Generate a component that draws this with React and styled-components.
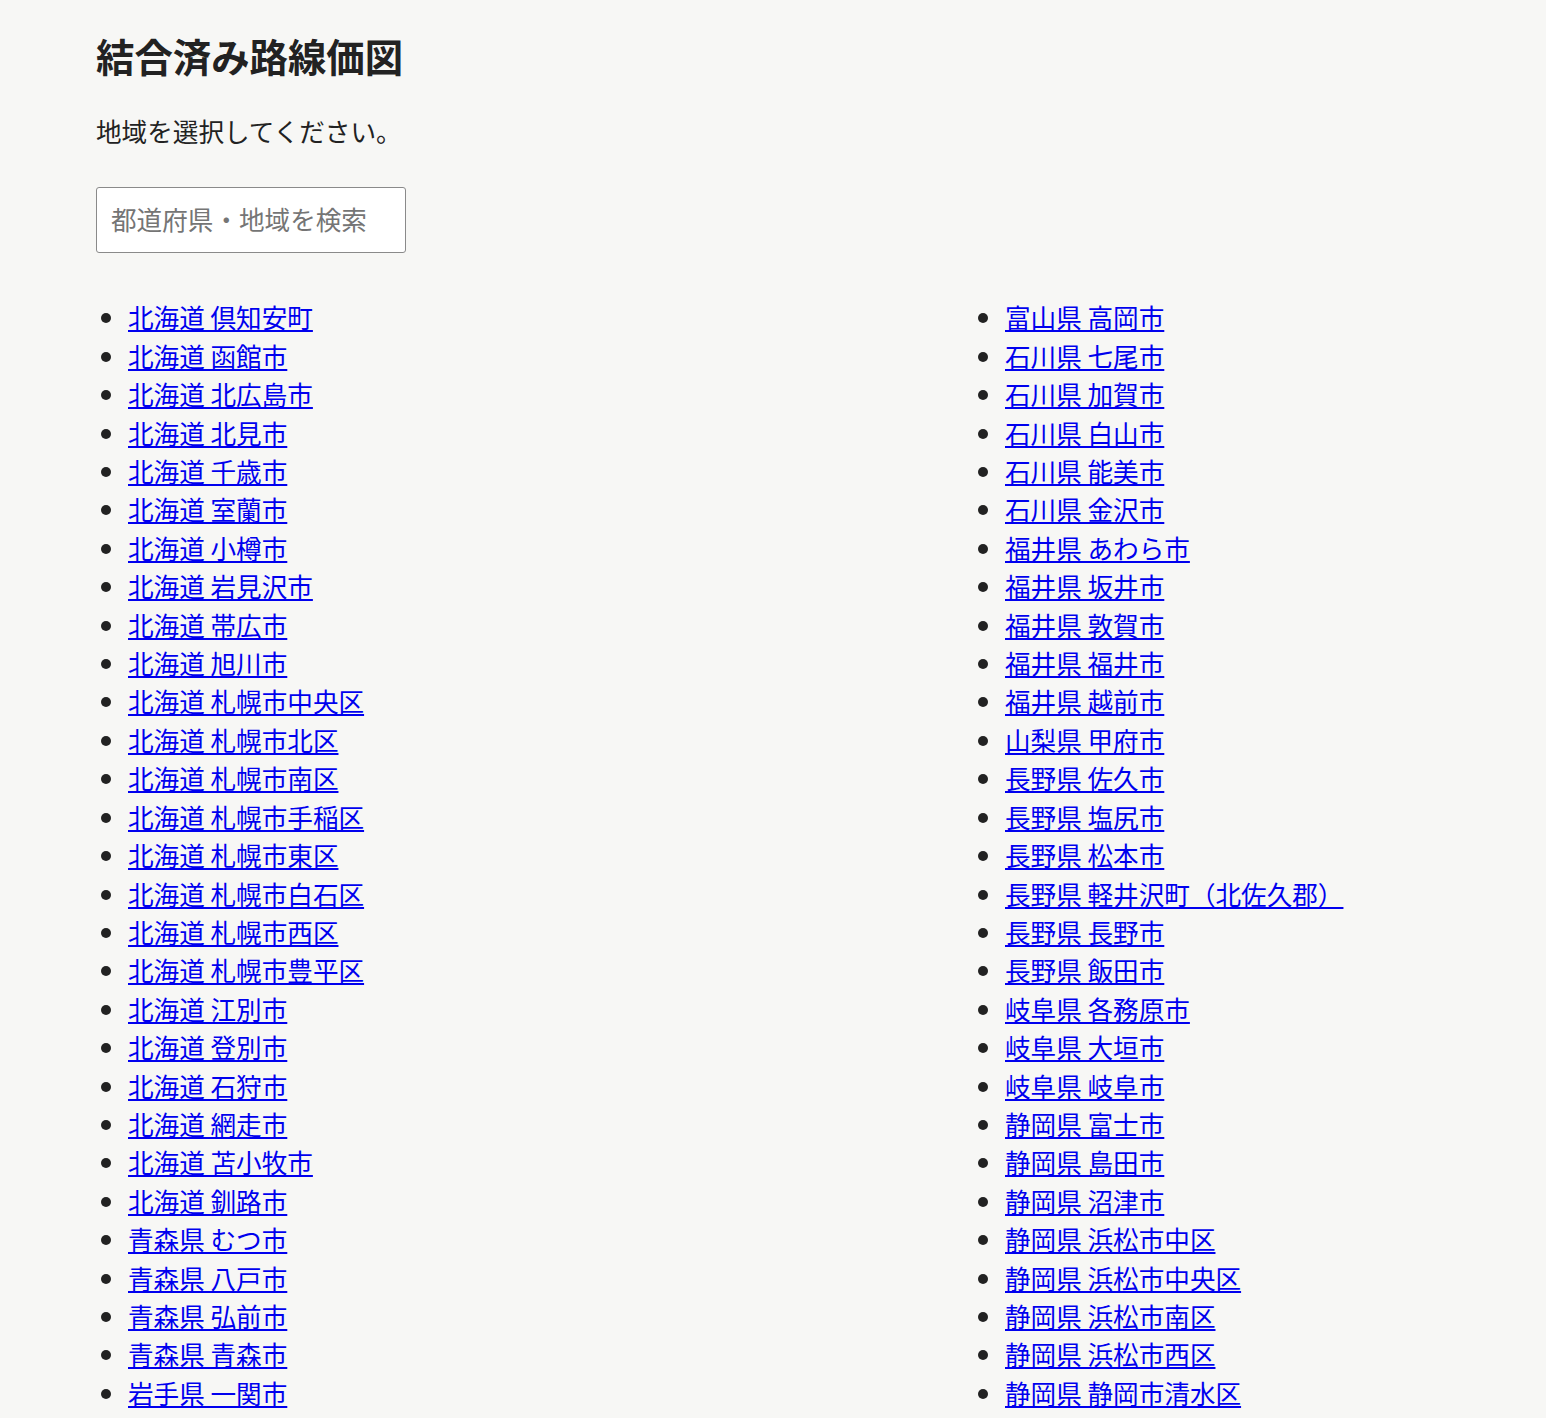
import React from "react";
import styled, { createGlobalStyle } from "styled-components";

const Global = createGlobalStyle`
  html, body { margin: 0; padding: 0; background: #f7f7f5; }
  body { font-family: "Noto Sans CJK JP", "Noto Sans", sans-serif; color: #222; }
`;

const Page = styled.main`
  padding: 32px 96px 0 96px;
`;

const Title = styled.h1`
  margin: 0;
  font-size: 38.4px;
  line-height: 46px;
  font-weight: 700;
  color: #222;
`;

const Lead = styled.p`
  margin: 34px 0 0 0;
  font-size: 25.6px;
  line-height: 38.4px;
  color: #222;
`;

const Search = styled.input`
  display: block;
  box-sizing: border-box;
  margin-top: 37px;
  width: 310px;
  height: 66px;
  padding: 0 14px 3px 14px;
  border: 1.6px solid #8a8a8a;
  border-radius: 3px;
  background: #fff;
  font-family: inherit;
  font-size: 25.6px;
  color: #222;
  outline: none;
  &::placeholder { color: #757575; }
`;

const Columns = styled.div`
  display: flex;
  margin-top: 45px;
`;

const List = styled.ul`
  margin: 0;
  padding: 0 0 0 32px;
  width: ${(p) => p.$width || "auto"};
  box-sizing: border-box;
  list-style: disc;
  font-size: 25.6px;
  line-height: 38.4px;
`;

const Item = styled.li`
  &::marker { color: #222; }
`;

const Link = styled.a`
  color: #0000ee;
  text-decoration: underline;
  text-decoration-thickness: 1.6px;
  text-underline-offset: 2px;
`;

const left = [
  "北海道 倶知安町", "北海道 函館市", "北海道 北広島市", "北海道 北見市", "北海道 千歳市",
  "北海道 室蘭市", "北海道 小樽市", "北海道 岩見沢市", "北海道 帯広市", "北海道 旭川市",
  "北海道 札幌市中央区", "北海道 札幌市北区", "北海道 札幌市南区", "北海道 札幌市手稲区",
  "北海道 札幌市東区", "北海道 札幌市白石区", "北海道 札幌市西区", "北海道 札幌市豊平区",
  "北海道 江別市", "北海道 登別市", "北海道 石狩市", "北海道 網走市", "北海道 苫小牧市",
  "北海道 釧路市", "青森県 むつ市", "青森県 八戸市", "青森県 弘前市", "青森県 青森市",
  "岩手県 一関市",
];

const right = [
  "富山県 高岡市", "石川県 七尾市", "石川県 加賀市", "石川県 白山市", "石川県 能美市",
  "石川県 金沢市", "福井県 あわら市", "福井県 坂井市", "福井県 敦賀市", "福井県 福井市",
  "福井県 越前市", "山梨県 甲府市", "長野県 佐久市", "長野県 塩尻市", "長野県 松本市",
  "長野県 軽井沢町（北佐久郡）", "長野県 長野市", "長野県 飯田市", "岐阜県 各務原市",
  "岐阜県 大垣市", "岐阜県 岐阜市", "静岡県 富士市", "静岡県 島田市", "静岡県 沼津市",
  "静岡県 浜松市中区", "静岡県 浜松市中央区", "静岡県 浜松市南区", "静岡県 浜松市西区",
  "静岡県 静岡市清水区",
];

export default function App() {
  return (
    <>
      <Global />
      <Page>
        <Title>結合済み路線価図</Title>
        <Lead>地域を選択してください。</Lead>
        <Search type="text" placeholder="都道府県・地域を検索" />
        <Columns>
          <List $width="877px">
            {left.map((t) => (
              <Item key={t}><Link href="#">{t}</Link></Item>
            ))}
          </List>
          <List>
            {right.map((t) => (
              <Item key={t}><Link href="#">{t}</Link></Item>
            ))}
          </List>
        </Columns>
      </Page>
    </>
  );
}
